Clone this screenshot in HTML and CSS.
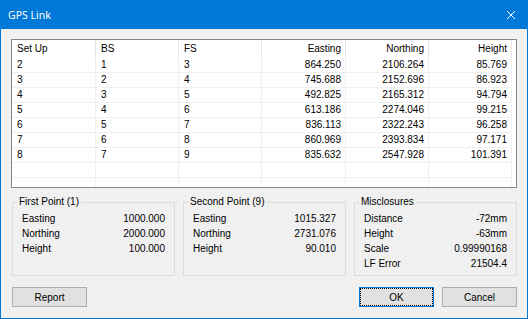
FILE: index.html
```html
<!DOCTYPE html>
<html lang="en">
<head>
    <meta charset="UTF-8">
    <meta name="viewport" content="width=device-width, initial-scale=1.0">
    <title>GPS Link</title>
    <link rel="stylesheet" href="styles.css">
</head>
<body>
    <div class="window">
        <div class="titlebar">
            <span class="title">GPS Link</span>
            <svg class="close" width="10" height="10" viewBox="0 0 10 10">
                <path d="M1 1 L9 9 M9 1 L1 9" stroke="#fff" stroke-width="1" fill="none"/>
            </svg>
        </div>
        <div class="content">
            <div class="list">
                <div class="row head">
                    <div class="cell">Set Up</div>
                    <div class="cell">BS</div>
                    <div class="cell">FS</div>
                    <div class="cell num">Easting</div>
                    <div class="cell num">Northing</div>
                    <div class="cell num">Height</div>
                </div>
                <div class="row">
                    <div class="cell">2</div><div class="cell">1</div><div class="cell">3</div>
                    <div class="cell num">864.250</div><div class="cell num">2106.264</div><div class="cell num">85.769</div>
                </div>
                <div class="row">
                    <div class="cell">3</div><div class="cell">2</div><div class="cell">4</div>
                    <div class="cell num">745.688</div><div class="cell num">2152.696</div><div class="cell num">86.923</div>
                </div>
                <div class="row">
                    <div class="cell">4</div><div class="cell">3</div><div class="cell">5</div>
                    <div class="cell num">492.825</div><div class="cell num">2165.312</div><div class="cell num">94.794</div>
                </div>
                <div class="row">
                    <div class="cell">5</div><div class="cell">4</div><div class="cell">6</div>
                    <div class="cell num">613.186</div><div class="cell num">2274.046</div><div class="cell num">99.215</div>
                </div>
                <div class="row">
                    <div class="cell">6</div><div class="cell">5</div><div class="cell">7</div>
                    <div class="cell num">836.113</div><div class="cell num">2322.243</div><div class="cell num">96.258</div>
                </div>
                <div class="row">
                    <div class="cell">7</div><div class="cell">6</div><div class="cell">8</div>
                    <div class="cell num">860.969</div><div class="cell num">2393.834</div><div class="cell num">97.171</div>
                </div>
                <div class="row">
                    <div class="cell">8</div><div class="cell">7</div><div class="cell">9</div>
                    <div class="cell num">835.632</div><div class="cell num">2547.928</div><div class="cell num">101.391</div>
                </div>
                <div class="row">
                    <div class="cell"></div><div class="cell"></div><div class="cell"></div>
                    <div class="cell"></div><div class="cell"></div><div class="cell"></div>
                </div>
                <div class="row">
                    <div class="cell"></div><div class="cell"></div><div class="cell"></div>
                    <div class="cell"></div><div class="cell"></div><div class="cell"></div>
                </div>
            </div>

            <div class="groups">
                <fieldset class="group">
                    <legend>First Point (1)</legend>
                    <div class="line"><span>Easting</span><span>1000.000</span></div>
                    <div class="line"><span>Northing</span><span>2000.000</span></div>
                    <div class="line"><span>Height</span><span>100.000</span></div>
                </fieldset>
                <fieldset class="group">
                    <legend>Second Point (9)</legend>
                    <div class="line"><span>Easting</span><span>1015.327</span></div>
                    <div class="line"><span>Northing</span><span>2731.076</span></div>
                    <div class="line"><span>Height</span><span>90.010</span></div>
                </fieldset>
                <fieldset class="group">
                    <legend>Misclosures</legend>
                    <div class="line"><span>Distance</span><span>-72mm</span></div>
                    <div class="line"><span>Height</span><span>-63mm</span></div>
                    <div class="line"><span>Scale</span><span>0.99990168</span></div>
                    <div class="line"><span>LF Error</span><span>21504.4</span></div>
                </fieldset>
            </div>

            <div class="actions">
                <button>Report</button>
                <button class="ok">OK</button>
                <button>Cancel</button>
            </div>
        </div>
    </div>
</body>
</html>
```

FILE: styles.css
```css
body {
    margin: 0;
    font-family: "Liberation Sans", Arial, sans-serif;
    font-size: 10px;
    color: #000;
    background-color: #f0f0f0;
}
.window {
    width: 528px;
    height: 319px;
    box-sizing: border-box;
    border: 1px solid #0078d7;
    border-top: none;
    background-color: #f0f0f0;
}
.titlebar {
    height: 29px;
    background-color: #0078d7;
    color: #fff;
    display: flex;
    align-items: center;
    justify-content: space-between;
    padding: 0 11px 0 7px;
    font-family: "Noto Sans", sans-serif;
    font-size: 10.5px;
}
.close {
    display: block;
}
.content {
    padding: 10px 10px 0 10px;
}
/* list view */
.list {
    height: 149px;
    box-sizing: border-box;
    border: 1px solid #828790;
    background-color: #fff;
    overflow: hidden;
}
.row {
    display: grid;
    grid-template-columns: 84px 83px 83px 84px 83px 83px;
    height: 15px;
    line-height: 14px;
    border-bottom: 1px solid #f0f0f0;
    box-sizing: border-box;
    width: 500px;
}
.row .cell {
    padding: 0 5px;
    border-right: 1px solid #f0f0f0;
    white-space: nowrap;
}
.row .num {
    text-align: right;
    padding-right: 4px;
}
.row.head {
    height: 18px;
    line-height: 18px;
    border-bottom: none;
}
.row.head .cell {
    border-right-color: #e5e5e5;
}
/* group boxes */
.groups {
    display: flex;
    gap: 8px;
    margin: 8px 0 0 1px;
}
.group {
    flex: 1;
    min-width: 0;
    margin: 0;
    padding: 3px 9px 4px 9px;
    border: 1px solid #dcdcdc;
}
.group legend {
    margin-left: -5px;
    padding: 0 2px;
    line-height: 12px;
}
.line {
    display: flex;
    justify-content: space-between;
    line-height: 15px;
}
/* buttons */
.actions {
    display: flex;
    gap: 8px;
    margin: 11px 0 0 1px;
}
.actions button {
    width: 75px;
    height: 20px;
    padding: 0;
    border: 1px solid #adadad;
    background-color: #e1e1e1;
    font-family: "Liberation Sans", Arial, sans-serif;
    font-size: 10px;
    color: #000;
}
.actions button.ok {
    margin-left: auto;
    border-color: #0078d7;
    outline: 1px dotted #000;
    outline-offset: -2px;
}
```
